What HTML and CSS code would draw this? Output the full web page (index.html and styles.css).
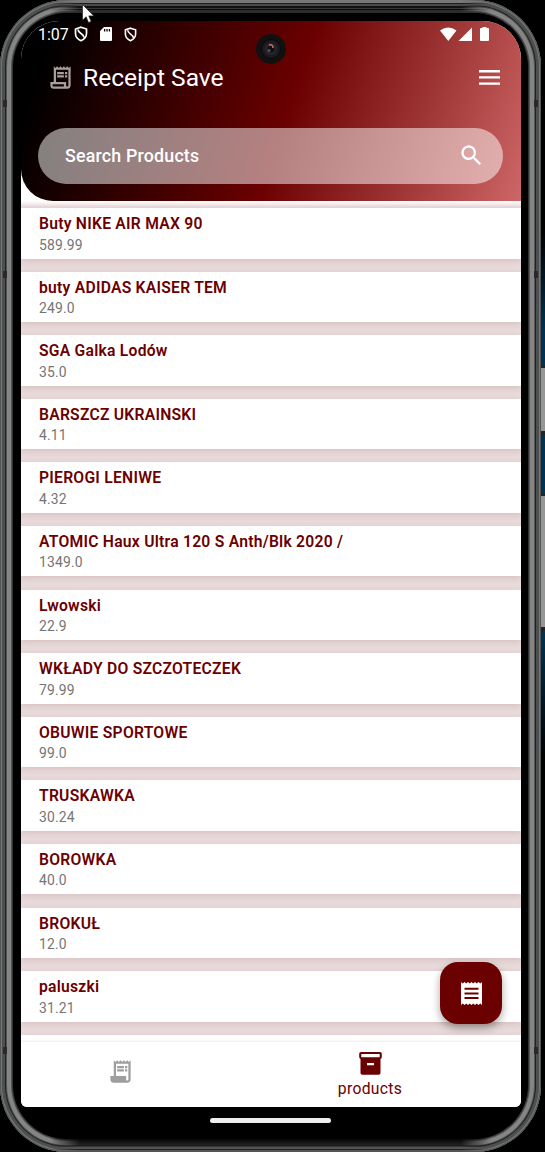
FILE: index.html
```html
<!DOCTYPE html>
<html lang="en">
<head>
<meta charset="utf-8">
<title>Receipt Save</title>
<link rel="stylesheet" href="styles.css">
</head>
<body>
<svg class="defs" width="0" height="0">
  <symbol id="receipt-long" viewBox="0 0 24 24"><path d="M19.500 3.500 18 2l-1.500 1.500L15 2l-1.500 1.500L12 2l-1.500 1.500L9 2 7.500 3.500 6 2v14H3v3c0 1.660 1.340 3 3 3h12c1.660 0 3-1.340 3-3V2l-1.500 1.500zM19 19c0 .55-.45 1-1 1s-1-.45-1-1v-3H8V5h11v14z"/><path d="M9 7h6v2H9zM16 7h2v2h-2zM9 10h6v2H9zM16 10h2v2h-2z"/></symbol>
  <symbol id="receipt-outline" viewBox="0 0 24 24"><path d="M19.500 3.500 18 2l-1.500 1.500L15 2l-1.500 1.500L12 2l-1.500 1.500L9 2 7.500 3.500 6 2v14H3v3c0 1.660 1.340 3 3 3h12c1.660 0 3-1.340 3-3V2l-1.500 1.500zM15 20H6c-.55 0-1-.45-1-1v-1h10v2zM19 19c0 .55-.45 1-1 1s-1-.45-1-1v-3H8V5h11v14z"/><path d="M9 7h6v2H9zM16 7h2v2h-2zM9 10h6v2H9zM16 10h2v2h-2z"/></symbol>
  <symbol id="shield" viewBox="0 0 14 16"><path d="M7 1.200 12.500 3v4.500c0 3.500-2.400 5.900-5.500 7.200-3.100-1.300-5.500-3.700-5.500-7.200V3zM4 3.500c0 4 6 4 6 8" fill="none" stroke="#fff" stroke-width="1.700"/></symbol>
</svg>
<div class="side-windows"><i class="win one"></i><i class="win two"></i></div>
<div class="phone">
  <div class="screen">
    <header class="header">
      <div class="status">
        <span class="clock">1:07</span>
        <svg class="s-shield" width="14" height="16"><use href="#shield"/></svg>
        <svg class="s-card" width="12" height="14" viewBox="0 0 12 14"><path fill="#fff" fill-rule="evenodd" d="M4 0h7q1 0 1 1v12q0 1-1 1H1q-1 0-1-1V4zM4 2v2.500h1.300V2zm2.400 0v2.500h1.300V2zm2.400 0v2.500h1.300V2z"/></svg>
        <svg class="s-shield2" width="13" height="15" viewBox="0 0 14 16"><use href="#shield"/></svg>
        <svg class="s-right" width="50" height="15" viewBox="0 0 50 15"><path fill="#fff" d="M0 3.500Q8.200-2.700 16.500 3.500L8.300 14zM18.500 14 32 .5V14zM40 2q0-1 1-1h1.500V0h4v1H48q1 0 1 1v11q0 1-1 1h-7q-1 0-1-1z"/></svg>
      </div>
      <div class="titlebar">
        <svg class="logo" width="27" height="27"><use href="#receipt-outline"/></svg>
        <h1>Receipt Save</h1>
        <svg class="menu" width="21" height="15" viewBox="0 0 21 15"><path fill="#fff" d="M0 0h21v2.400H0zM0 6.200h21v2.400H0zM0 12.400h21v2.400H0z"/></svg>
      </div>
      <div class="search">
        <span>Search Products</span>
        <svg width="27" height="27" viewBox="0 0 24 24"><path fill="#fff" d="M15.500 14h-.79l-.28-.27A6.500 6.500 0 1 0 13.730 14.430l.27.28v.79l5 4.990L20.490 19zM9.500 14a4.500 4.500 0 1 1 0-9 4.500 4.500 0 0 1 0 9z"/></svg>
      </div>
    </header>
    <main class="list">
      <article><h2>Buty NIKE AIR MAX 90</h2><p>589.99</p></article>
      <article><h2>buty ADIDAS KAISER TEM</h2><p>249.0</p></article>
      <article><h2>SGA Galka Lodów</h2><p>35.0</p></article>
      <article><h2>BARSZCZ UKRAINSKI</h2><p>4.11</p></article>
      <article><h2>PIEROGI LENIWE</h2><p>4.32</p></article>
      <article><h2>ATOMIC Haux Ultra 120 S Anth/Blk 2020 /</h2><p>1349.0</p></article>
      <article><h2>Lwowski</h2><p>22.9</p></article>
      <article><h2>WKŁADY DO SZCZOTECZEK</h2><p>79.99</p></article>
      <article><h2>OBUWIE SPORTOWE</h2><p>99.0</p></article>
      <article><h2>TRUSKAWKA</h2><p>30.24</p></article>
      <article><h2>BOROWKA</h2><p>40.0</p></article>
      <article><h2>BROKUŁ</h2><p>12.0</p></article>
      <article><h2>paluszki</h2><p>31.21</p></article>
      <article></article>
    </main>
    <nav class="nav">
      <div class="tab"><svg width="27" height="27"><use href="#receipt-long"/></svg></div>
      <div class="tab active">
        <svg width="23" height="23" viewBox="0 0 23 23"><path fill="#6b0000" fill-rule="evenodd" d="M2 0h19q1.800 0 1.800 1.800V5q0 1.500-1.300 2v14q0 1.800-1.800 1.800H3.300q-1.800 0-1.800-1.800V7Q.2 6.500.2 5V1.800Q.2 0 2 0zm.3 2v3.300h18.400V2zM8 11v2.300h7V11z"/></svg>
        <span>products</span>
      </div>
    </nav>
  </div>
  <div class="home"></div>
  <i class="edge top"></i>
  <i class="edge bottom"></i>
  <i class="antenna al a1"></i><i class="antenna al a2"></i><i class="antenna al a3"></i>
  <i class="antenna ar a1"></i><i class="antenna ar a2"></i><i class="antenna ar a3"></i>
</div>
<button class="fab" aria-label="Receipts"><svg width="21" height="23" viewBox="0 0 21 23"><path fill="#fff" fill-rule="evenodd" d="M0 0l1.750 1.600L3.500 0l1.750 1.600L7 0l1.750 1.600L10.500 0l1.750 1.600L14 0l1.750 1.600L17.500 0l1.750 1.600L21 0v23l-1.750-1.600L17.500 23l-1.750-1.600L14 23l-1.750-1.600L10.500 23l-1.750-1.600L7 23l-1.750-1.600L3.500 23l-1.750-1.600L0 23zM3.500 5.700v2h14v-2zm0 4.700v2h14v-2zm0 4.700v2h14v-2z"/></svg></button>
<svg class="camera" width="30" height="30" viewBox="0 0 30 30"><circle cx="15" cy="15" r="15" fill="#111"/><circle cx="15" cy="15" r="9.500" fill="#1b1b1d" stroke="#080808"/><circle cx="15" cy="15" r="6" fill="#2b2529"/><circle cx="15" cy="15" r="3.500" fill="#100e17"/><path d="M13 11q4-1 4 3" stroke="#c67774" stroke-width="1.500" fill="none"/><circle cx="13" cy="16.500" r="1.500" fill="#53506e"/></svg>
<svg class="cursor" width="13" height="20" viewBox="0 0 13 20"><path d="M.5.5v15.700l3.600-3.400 2.400 5.700 2.700-1.100-2.400-5.500h5z" fill="#fff" stroke="#222" stroke-width=".7"/></svg>
</body>
</html>
```
FILE: styles.css
```css
* { box-sizing: border-box; }
body { margin: 0; width: 545px; height: 1152px; overflow: hidden; position: relative; background: #000; font-family: Roboto, sans-serif; }
h1, h2, p { margin: 0; }
.defs { position: absolute; }
.side-windows { position: absolute; right: 0; top: 230px; width: 8px; height: 530px; background: linear-gradient(#000, #003150 100px, #003454 400px, #000); }
.win { position: absolute; left: 0; width: 8px; background: #969696; border: solid #222; border-width: 2px 0 4px; }
.one { top: 136px; height: 69px; }
.two { top: 264px; height: 137px; }
.phone {
  position: relative; width: 541px; height: 1152px; padding: 21px 20px 0 21px; border-radius: 67px; background: #000; overflow: hidden;
  box-shadow: inset 0 0 0 1px #555, inset 0 0 0 2px #777, inset 0 0 0 5px #4d5050, inset 0 0 0 6px #202222, inset 0 0 0 7px #555, inset 0 0 0 11px #858585, inset 0 0 0 12px #555, inset 0 0 0 13px #333;
}
.edge { position: absolute; left: 50px; right: 50px; height: 14px; mask-image: linear-gradient(90deg, transparent, #000 30px, #000 calc(100% - 30px), transparent); }
.top { top: 0; background: linear-gradient(#777 0 3px, #1c1c1c 3px 4px, #4a4a4a 4px 6px, #111 6px 8px, #383838 8px 9px, #080808 9px 10px, #2c2c2c 10px 13px, #000 13px); }
.bottom { bottom: 0; background: linear-gradient(#000 0, #222 7px, #151515 8px, #555 9px 11px, #222 11px 12px, #555 12px); }
.antenna { position: absolute; width: 4px; height: 7px; background: #292929; }
.al { left: 3px; }
.ar { right: 3px; }
.a1 { top: 100px; }
.a2 { top: 271px; }
.a3 { top: 1047px; }
.screen { width: 500px; height: 1086px; display: flex; flex-direction: column; overflow: hidden; background: #fff; border-radius: 38px 38px 6px 6px; }
.header { height: 180px; flex: none; border-bottom-left-radius: 32px; background: linear-gradient(109deg, #000 6%, #6b0000 53%, #cd6666 100%); }
.status { height: 26px; display: flex; align-items: center; padding: 0 31px 0 17px; color: #fff; }
.clock { font-size: 16px; width: 36px; }
.s-card { margin-left: 12px; }
.s-shield2 { margin-left: 12px; }
.s-right { margin-left: auto; }
.titlebar { height: 61px; display: flex; align-items: center; padding: 0 21px 0 26px; color: #fff; }
.logo { fill: #a99d9d; }
h1 { font-size: 24.600px; font-weight: 400; margin-left: 9px; }
.menu { margin-left: auto; }
.search { height: 56px; margin: 19.500px 18px 0 17px; padding: 0 18px 1px 27px; display: flex; align-items: center; justify-content: space-between; border-radius: 28px; background: rgba(255,255,255,.5); color: #fff; font-size: 17.800px; font-weight: 500; letter-spacing: .2px; }
.list { flex: 1; min-height: 0; overflow: hidden; padding-top: 7px; background: linear-gradient(#fff, #e8dada 6px); display: flex; flex-direction: column; gap: 13.1px; }
article { flex: none; height: 50.500px; background: #fff; padding: 6px 18px; box-shadow: 0 2px 6px rgba(107,0,0,.12); }
h2 { font-size: 15.700px; line-height: 20.500px; font-weight: 600; color: #6b0000; letter-spacing: .24px; }
article p { font-size: 13.900px; line-height: 20.500px; color: #757575; letter-spacing: .18px; }
.nav { position: relative; flex: none; height: 65px; display: grid; grid-template-columns: 198px 302px; background: #fff; box-shadow: 0 -1px 2px rgba(0,0,0,.08); }
.tab { display: flex; flex-direction: column; align-items: center; padding-top: 15.500px; fill: #9e9e9e; }
.active { padding-top: 10px; color: #6b0000; font-size: 15.700px; line-height: 20px; letter-spacing: .3px; gap: 3.500px; }
.home { width: 121px; height: 5px; border-radius: 3px; background: #eee; margin: 11px 0 0 189px; }
.fab { position: absolute; left: 440px; top: 962px; width: 62px; height: 62px; border: 0; padding: 0; display: grid; place-items: center; border-radius: 18px; background: #6b0000; box-shadow: 0 4px 8px rgba(0,0,0,.35); }
.camera { position: absolute; left: 256px; top: 34px; }
.cursor { position: absolute; left: 82px; top: 4px; }
```
